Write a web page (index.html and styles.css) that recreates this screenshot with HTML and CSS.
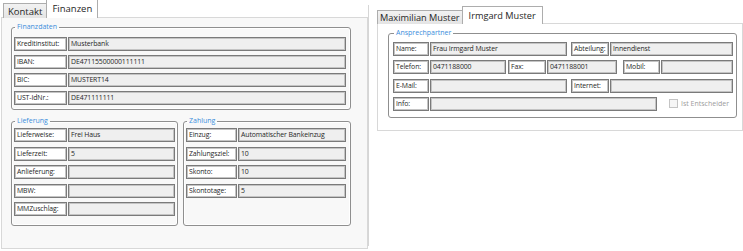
FILE: index.html
```html
<!DOCTYPE html>
<html lang="de">
<head>
    <meta charset="UTF-8">
    <title>Finanzen / Ansprechpartner</title>
    <link rel="stylesheet" href="styles.css">
</head>
<body>
    <div class="pane-left">
        <div class="tab-strip">
            <div class="tab">Kontakt</div>
            <div class="tab active">Finanzen</div>
        </div>
        <div class="tab-body">
            <fieldset class="group">
                <legend>Finanzdaten</legend>
                <div class="row">
                    <div class="lbl w53">Kreditinstitut:</div>
                    <div class="val w278">Musterbank</div>
                </div>
                <div class="row">
                    <div class="lbl w53">IBAN:</div>
                    <div class="val w278">DE47115500000111111</div>
                </div>
                <div class="row">
                    <div class="lbl w53">BIC:</div>
                    <div class="val w278">MUSTERT14</div>
                </div>
                <div class="row">
                    <div class="lbl w53">UST-IdNr.:</div>
                    <div class="val w278">DE471111111</div>
                </div>
            </fieldset>

            <div class="pair">
                <fieldset class="group small lieferung">
                    <legend>Lieferung</legend>
                    <div class="row">
                        <div class="lbl w53">Lieferweise:</div>
                        <div class="val w107">Frei Haus</div>
                    </div>
                    <div class="row">
                        <div class="lbl w53">Lieferzeit:</div>
                        <div class="val w107">5</div>
                    </div>
                    <div class="row">
                        <div class="lbl w53">Anlieferung:</div>
                        <div class="val w107"></div>
                    </div>
                    <div class="row">
                        <div class="lbl w53">MBW:</div>
                        <div class="val w107"></div>
                    </div>
                    <div class="row">
                        <div class="lbl w53">MMZuschlag:</div>
                        <div class="val w107"></div>
                    </div>
                </fieldset>
                <fieldset class="group small zahlung">
                    <legend>Zahlung</legend>
                    <div class="row">
                        <div class="lbl w51">Einzug:</div>
                        <div class="val w108">Automatischer Bankeinzug</div>
                    </div>
                    <div class="row">
                        <div class="lbl w51">Zahlungsziel:</div>
                        <div class="val w108">10</div>
                    </div>
                    <div class="row">
                        <div class="lbl w51">Skonto:</div>
                        <div class="val w108">10</div>
                    </div>
                    <div class="row">
                        <div class="lbl w51">Skontotage:</div>
                        <div class="val w108">5</div>
                    </div>
                </fieldset>
            </div>
        </div>
    </div>

    <div class="divider"></div>

    <div class="pane-right">
        <div class="tab-strip big">
            <div class="tab">Maximilian Muster</div>
            <div class="tab active">Irmgard Muster</div>
        </div>
        <div class="tab-body white">
            <fieldset class="group contact">
                <legend>Ansprechpartner</legend>
                <div class="row">
                    <div class="lbl w36">Name:</div>
                    <div class="val w137">Frau Irmgard Muster</div>
                    <div class="lbl w38 ml4">Abteilung:</div>
                    <div class="val w123">Innendienst</div>
                </div>
                <div class="row">
                    <div class="lbl w36">Telefon:</div>
                    <div class="val w76">0471188000</div>
                    <div class="lbl w38 ml2">Fax:</div>
                    <div class="val w70">0471188001</div>
                    <div class="lbl w37 ml6">Mobil:</div>
                    <div class="val w72"></div>
                </div>
                <div class="row">
                    <div class="lbl w36">E-Mail:</div>
                    <div class="val w137"></div>
                    <div class="lbl w38 ml4">Internet:</div>
                    <div class="val w123"></div>
                </div>
                <div class="row">
                    <div class="lbl w36">Info:</div>
                    <div class="val w227"></div>
                    <label class="check"><span class="box"></span>Ist Entscheider</label>
                </div>
            </fieldset>
        </div>
    </div>
</body>
</html>
```

FILE: styles.css
```css
body {
    margin: 0;
    display: flex;
    font-family: 'Open Sans', sans-serif;
    color: #262626;
    background: #fff;
}

/* tabs */
.tab-strip {
    display: flex;
    align-items: flex-end;
    height: 18px;
    padding-left: 2px;
    margin-bottom: -1px;
}
.tab {
    height: 15px;
    line-height: 15px;
    padding: 0 4px;
    font-size: 9.5px;
    border: 1px solid #adadad;
    border-bottom: none;
    background: linear-gradient(#f2f2f2, #e4e4e4);
    box-sizing: border-box;
}
.tab.active {
    position: relative;
    height: 19px;
    line-height: 18px;
    padding: 0 5px;
    margin-left: -1px;
    background: #fff;
    font-size: 9.5px;
}
.tab-strip.big {
    height: 24px;
    padding-left: 0;
}
.tab-strip.big .tab {
    height: 14px;
    line-height: 13px;
    font-size: 9.2px;
    padding: 0 2px;
}
.tab-strip.big .tab.active {
    height: 18px;
    line-height: 17px;
    padding: 0 6px;
}

.tab-body {
    border: 1px solid #d8d8d8;
    background: #f8f8f8;
}

/* left pane */
.pane-left {
    width: 367px;
    margin-left: 1px;
}
.pane-left .tab-body {
    height: 226px;
    padding: 4px 0 0 9px;
}
.divider {
    width: 1px;
    height: 241px;
    margin-top: 5px;
    background: #d6d6d6;
}

/* group boxes */
.group {
    margin: 0;
    min-width: 0;
    border: 1px solid #8f8f8f;
    border-radius: 3px;
    box-shadow: inset 0 0 0 1px #fff;
    padding: 5px 4px 4px 2px;
    display: flex;
    flex-direction: column;
    gap: 4px;
    width: 340px;
    box-sizing: border-box;
}
.group legend {
    font-size: 7px;
    line-height: 10px;
    color: #3a8ddb;
    padding: 0 2px;
    margin-left: 1px;
}
.pair {
    display: flex;
    gap: 5px;
    margin-top: 6px;
}
.group.small {
    gap: 4.5px;
    padding-top: 2px;
    padding-bottom: 7px;
    height: 110px;
}
.lieferung {
    width: 167px;
    padding-right: 2px;
}
.zahlung {
    width: 168px;
}

.row {
    display: flex;
    gap: 1px;
    height: 14px;
}
.lbl, .val {
    box-sizing: border-box;
    height: 14px;
    font-size: 6.9px;
    letter-spacing: -0.1px;
    line-height: 12px;
    padding-left: 2px;
    border: 1px solid #7a7a7a;
    box-shadow: inset 0 0 0 1px #c4c4c4;
    white-space: nowrap;
    overflow: hidden;
}
.lbl {
    background: #fff;
}
.val {
    background: #efefef;
}

.w36 { width: 36px; }
.w37 { width: 37px; }
.w38 { width: 38px; }
.w51 { width: 51px; }
.w53 { width: 53px; }
.w70 { width: 70px; }
.w72 { width: 72px; }
.w76 { width: 76px; }
.w107 { width: 107px; }
.w108 { width: 108px; }
.w123 { width: 123px; }
.w137 { width: 137px; }
.w227 { width: 227px; }
.w278 { width: 278px; }
.ml2 { margin-left: 1px; }
.ml4 { margin-left: 3px; }
.ml6 { margin-left: 5px; }

/* right pane */
.pane-right {
    margin-left: 8px;
    width: 366px;
}
.tab-body.white {
    background: #fff;
    height: 102px;
    padding: 4px 0 0 10px;
}
.group.contact {
    width: 349px;
    padding: 4px 3px 6px 4px;
    gap: 4.3px;
}
.check {
    display: flex;
    align-items: center;
    gap: 3px;
    margin-left: 11px;
    font-size: 7px;
    color: #9c9c9c;
}
.check .box {
    width: 9px;
    height: 9px;
    box-sizing: border-box;
    border: 1px solid #c4c4c4;
    background: #f6f6f6;
}
```
